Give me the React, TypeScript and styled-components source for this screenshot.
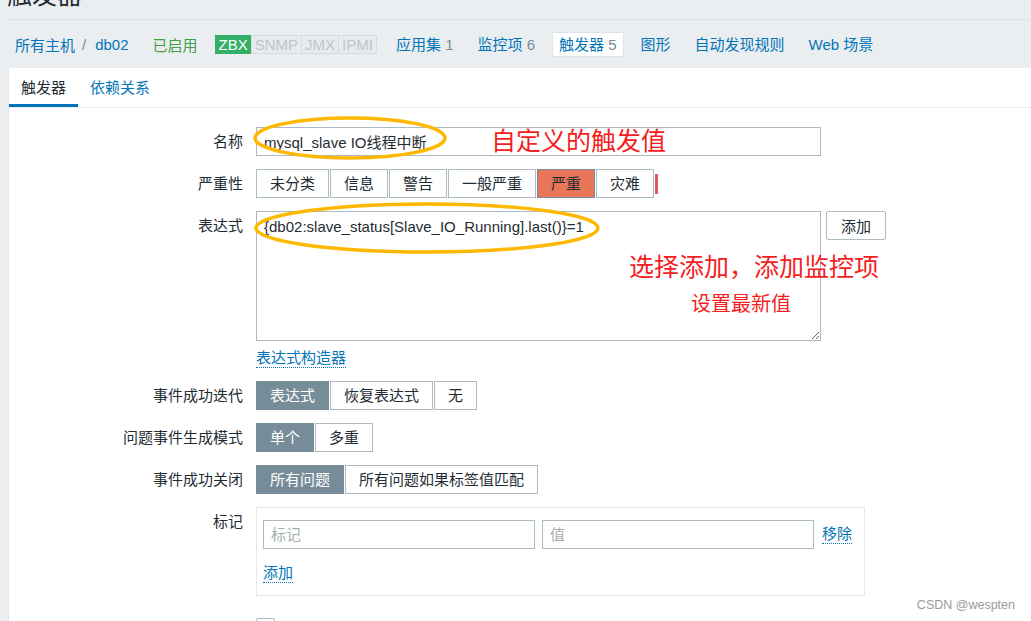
import React from 'react'
import styled, { createGlobalStyle } from 'styled-components'

const GlobalStyle = createGlobalStyle`
  body {
    margin: 0;
    background: #ebeef0;
    font-family: "Liberation Sans", Arial, "Noto Sans CJK SC", sans-serif;
    font-size: 15px;
    color: #1f2c33;
    overflow: hidden;
  }
  * { box-sizing: border-box; }
`

const Page = styled.div`
  position: relative;
  height: 621px;
  overflow: hidden;
  display: flex;
  flex-direction: column;
  & > * { flex-shrink: 0; }
`

const TitleBar = styled.div`
  height: 20px;
  margin-left: 7px;
  border-bottom: 1px solid #dce2e5;
  overflow: hidden;
`
const Title = styled.h1`
  margin: -17px 0 0;
  font-size: 25px;
  line-height: 25px;
  font-weight: normal;
`

const HostNav = styled.div`
  height: 48px;
  display: flex;
  align-items: center;
  gap: 10px;
  padding-left: 8px;
`
const Crumbs = styled.div`
  padding: 0 7px;
  display: flex;
  align-items: center;
`
const Link = styled.span`
  color: #0275b8;
`
const Sep = styled.span`
  color: #768d99;
  margin: 0 9px 0 7px;
`
const Status = styled.span`
  padding: 0 7px;
  color: #429e47;
`
const Badges = styled.div`
  display: flex;
  margin-right: 2px;
`
const Badge = styled.span<{ $on?: boolean }>`
  height: 19px;
  line-height: 17px;
  padding: 0 3px;
  font-size: 15px;
  border: 1px solid ${p => (p.$on ? '#34af67' : '#d6dde0')};
  background: ${p => (p.$on ? '#34af67' : '#e8ebed')};
  color: ${p => (p.$on ? '#fff' : '#bcc6cb')};
  & + & { margin-left: -1px; }
`
const NavItem = styled.span<{ $active?: boolean }>`
  height: 25px;
  line-height: 23px;
  padding: 0 6px;
  color: #0275b8;
  border: 1px solid ${p => (p.$active ? '#dde3e6' : 'transparent')};
  border-radius: 2px;
  background: ${p => (p.$active ? '#fff' : 'transparent')};
`
const Count = styled.span`
  color: #768d99;
`

const Panel = styled.div`
  position: relative;
  flex: 1 0 auto;
  margin-left: 8px;
  background: #fff;
  border-left: 1px solid #e2e7ea;
`

const Tabs = styled.div`
  display: flex;
  border-bottom: 1px solid #ebeef0;
`
const Tab = styled.span<{ $active?: boolean }>`
  padding: 4px 12px 0;
  line-height: 32px;
  color: ${p => (p.$active ? '#1f2c33' : '#0275b8')};
  border-bottom: 3px solid ${p => (p.$active ? '#0275b8' : 'transparent')};
`

const Form = styled.div`
  display: grid;
  grid-template-columns: 234px 1fr;
  column-gap: 13px;
  row-gap: 13px;
  padding-top: 19px;
`
const Label = styled.div`
  text-align: right;
  line-height: 29px;
`
const Field = styled.div`
  display: flex;
  flex-direction: column;
  align-items: flex-start;
`
const Row = styled.div`
  display: flex;
  align-items: flex-start;
  gap: 5px;
`
const TextInput = styled.input<{ $w: number }>`
  flex-shrink: 0;
  width: ${p => p.$w}px;
  height: 29px;
  padding: 0 7px;
  border: 1px solid #acbbc2;
  font: inherit;
  color: #1f2c33;
  outline: none;
  &::placeholder { color: #a3adb2; }
`
const Expression = styled.textarea`
  width: 565px;
  height: 130px;
  padding: 6px 7px;
  border: 1px solid #acbbc2;
  font: inherit;
  color: #1f2c33;
  outline: none;
`
const Button = styled.button`
  height: 29px;
  padding: 0 14px;
  background: #fff;
  border: 1px solid #acbbc2;
  border-radius: 2px;
  font: inherit;
  color: #1f2c33;
`
const DottedLink = styled.span`
  display: inline-block;
  line-height: 18px;
  white-space: nowrap;
  color: #0275b8;
  border-bottom: 1px dotted #0275b8;
`
const BuilderLink = styled(DottedLink)`
  margin-top: 8px;
`
const Segments = styled.div`
  display: flex;
  align-items: center;
  gap: 1px;
`
const Seg = styled.span<{ $active?: boolean; $tone?: string }>`
  height: 29px;
  line-height: 27px;
  padding: 0 13px;
  border: 1px solid ${p => (p.$active || p.$tone ? '#768d99' : '#acbbc2')};
  background: ${p => p.$tone || (p.$active ? '#768d99' : '#fff')};
  color: ${p => (p.$active ? '#fff' : '#1f2c33')};
`
const SeverityMark = styled.span`
  width: 3px;
  height: 20px;
  background: #e45959;
`

const TagBox = styled.div`
  width: 609px;
  padding: 12px 0 12px 6px;
  border: 1px solid #e4e8ea;
`
const TagRow = styled.div`
  display: flex;
  align-items: center;
  gap: 7px;
`
const Remove = styled(DottedLink)`
  margin-left: 1px;
`
const AddTag = styled(DottedLink)`
  margin-top: 15px;
`
const Check = styled.span`
  width: 19px;
  height: 19px;
  margin-top: 9px;
  border: 1px solid #acbbc2;
  border-radius: 2px;
`

/* screenshot annotations laid over the form */
const Ring = styled.svg`
  position: absolute;
  overflow: visible;
`
const Note = styled.span<{ $size: number }>`
  position: absolute;
  font-family: "Noto Sans CJK SC", sans-serif;
  font-size: ${p => p.$size}px;
  line-height: 1.15;
  color: #f51d1d;
  white-space: nowrap;
`
const Watermark = styled.span`
  position: absolute;
  right: 16px;
  bottom: 9px;
  font-size: 12.5px;
  color: #9a9a9a;
`

const severities = ['未分类', '信息', '警告', '一般严重', '严重', '灾难']

export default function App() {
  return (
    <Page>
      <GlobalStyle />
      <TitleBar>
        <Title>触发器</Title>
      </TitleBar>
      <HostNav>
        <Crumbs>
          <Link>所有主机</Link>
          <Sep>/</Sep>
          <Link>db02</Link>
        </Crumbs>
        <Status>已启用</Status>
        <Badges>
          <Badge $on>ZBX</Badge>
          <Badge>SNMP</Badge>
          <Badge>JMX</Badge>
          <Badge>IPMI</Badge>
        </Badges>
        <NavItem>应用集 <Count>1</Count></NavItem>
        <NavItem>监控项 <Count>6</Count></NavItem>
        <NavItem $active>触发器 <Count>5</Count></NavItem>
        <NavItem>图形</NavItem>
        <NavItem>自动发现规则</NavItem>
        <NavItem>Web 场景</NavItem>
      </HostNav>
      <Panel>
        <Tabs>
          <Tab $active>触发器</Tab>
          <Tab>依赖关系</Tab>
        </Tabs>
        <Form>
          <Label>名称</Label>
          <Field>
            <TextInput $w={565} readOnly value="mysql_slave IO线程中断" />
          </Field>

          <Label>严重性</Label>
          <Field>
            <Segments>
              {severities.map(s => (
                <Seg key={s} $tone={s === '严重' ? '#e97659' : undefined}>{s}</Seg>
              ))}
              <SeverityMark />
            </Segments>
          </Field>

          <Label>表达式</Label>
          <Field>
            <Row>
              <Expression readOnly value="{db02:slave_status[Slave_IO_Running].last()}=1" />
              <Button>添加</Button>
            </Row>
            <BuilderLink>表达式构造器</BuilderLink>
          </Field>

          <Label>事件成功迭代</Label>
          <Field>
            <Segments>
              <Seg $active>表达式</Seg>
              <Seg>恢复表达式</Seg>
              <Seg>无</Seg>
            </Segments>
          </Field>

          <Label>问题事件生成模式</Label>
          <Field>
            <Segments>
              <Seg $active>单个</Seg>
              <Seg>多重</Seg>
            </Segments>
          </Field>

          <Label>事件成功关闭</Label>
          <Field>
            <Segments>
              <Seg $active>所有问题</Seg>
              <Seg>所有问题如果标签值匹配</Seg>
            </Segments>
          </Field>

          <Label>标记</Label>
          <Field>
            <TagBox>
              <TagRow>
                <TextInput $w={272} placeholder="标记" />
                <TextInput $w={272} placeholder="值" />
                <Remove>移除</Remove>
              </TagRow>
              <AddTag>添加</AddTag>
            </TagBox>
          </Field>

          <Label />
          <Field>
            <Check />
          </Field>
        </Form>

        <Ring style={{ left: 244, top: 48 }} width="194" height="44">
          <ellipse cx="97" cy="22" rx="95" ry="20" fill="none" stroke="#ffb800" strokeWidth="3.5" />
        </Ring>
        <Ring style={{ left: 245, top: 135 }} width="346" height="52">
          <ellipse cx="173" cy="25" rx="171" ry="24" fill="none" stroke="#ffb800" strokeWidth="3.5" />
        </Ring>
        <Note $size={25} style={{ left: 482, top: 57 }}>自定义的触发值</Note>
        <Note $size={25} style={{ left: 620, top: 183 }}>选择添加，添加监控项</Note>
        <Note $size={20} style={{ left: 682, top: 223 }}>设置最新值</Note>
      </Panel>
      <Watermark>CSDN @wespten</Watermark>
    </Page>
  )
}
